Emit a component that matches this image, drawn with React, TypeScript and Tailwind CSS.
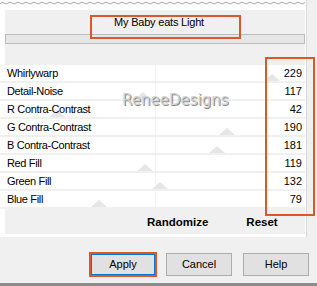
import React from "react";

const rows: [string, number][] = [
  ["Whirlywarp", 229],
  ["Detail-Noise", 117],
  ["R Contra-Contrast", 42],
  ["G Contra-Contrast", 190],
  ["B Contra-Contrast", 181],
  ["Red Fill", 119],
  ["Green Fill", 132],
  ["Blue Fill", 79],
];

function Wave() {
  let d = "M0 4";
  for (let x = 0; x < 305; x += 8) {
    d += ` Q${x + 2} 1 ${x + 4} 3 Q${x + 6} 5 ${x + 8} 3`;
  }
  return (
    <svg width="305" height="10" className="block">
      <path d={d} fill="none" stroke="#a8a8a8" strokeWidth="1" />
    </svg>
  );
}

export default function App() {
  return (
    <div
      className="relative w-[317px] h-[286px] bg-[#f0f0f0] flex flex-col overflow-hidden text-black"
      style={{ fontFamily: '"Liberation Sans", Arial, sans-serif' }}
    >
      {/* main panel */}
      <div className="w-[307px] h-[237px] bg-white border-r border-[#dadada] flex flex-col">
        <Wave />
        <div className="ml-[5px] w-[300px] h-[55px] bg-[#f0f0f0] flex flex-col">
          <div className="h-[24px] flex items-center justify-center text-[11px] tracking-[-0.2px] pl-[8px]">
            My Baby eats Light
          </div>
          <div className="h-[10px] bg-[#e6e6e6] border border-[#bcbcbc]" />
        </div>
        <div className="flex flex-col w-[305px]">
          {rows.map(([label, v]) => (
            <div
              key={label}
              className="relative h-[18px] bg-white border-b-2 border-[#f0f0f0] flex items-center justify-between pl-[7px] pr-[3px] text-[11px]"
            >
              <div className="absolute left-[155px] top-0 bottom-0 w-px bg-[#f3f3f3]" />
              <svg
                width="16"
                height="7"
                className="absolute bottom-0"
                style={{ left: 8 + v * 1.155 - 8 }}
              >
                <polygon points="0,7 8,0 16,7" fill="#e6e6e6" />
              </svg>
              <span className="relative tracking-[-0.35px]">{label}</span>
              <span className="relative">{v}</span>
            </div>
          ))}
        </div>
        <div className="ml-[5px] w-[300px] h-[25px] bg-[#f0f0f0] flex items-center text-[11.5px] font-bold pt-[3px]">
          <span className="ml-[142px]">Randomize</span>
          <span className="ml-[38px]">Reset</span>
        </div>
      </div>

      {/* buttons */}
      <div className="flex-1 flex items-start pt-[16px] pl-[90px] gap-[10px] text-[11px]">
        <div className="relative w-[66px] h-[23px] bg-[#e1e1e1] border-2 border-[#0078d7] flex items-center justify-center">
          Apply
          <div className="absolute -inset-[3px] border-2 border-[#d9582c] pointer-events-none" />
        </div>
        <div className="w-[66px] h-[23px] bg-[#e1e1e1] border border-[#adadad] flex items-center justify-center">
          Cancel
        </div>
        <div className="ml-[1px] w-[66px] h-[23px] bg-[#e1e1e1] border border-[#adadad] flex items-center justify-center">
          Help
        </div>
      </div>
      <div className="h-[3px] bg-[#8c8c8c]" />

      {/* annotation overlays */}
      <div className="absolute left-[90px] top-[15px] w-[151px] h-[24px] border-2 border-[#d9582c]" />
      <div className="absolute left-[265px] top-[57px] w-[50px] h-[159px] border-2 border-[#d9582c]" />
      <div
        className="absolute left-[122px] top-[89px] text-[15px] text-[#d2d2d2] [text-shadow:1px_1px_0_#8a8a8a]"
        style={{ fontFamily: '"DejaVu Sans", sans-serif' }}
      >
        ReneeDesigns
      </div>
    </div>
  );
}
